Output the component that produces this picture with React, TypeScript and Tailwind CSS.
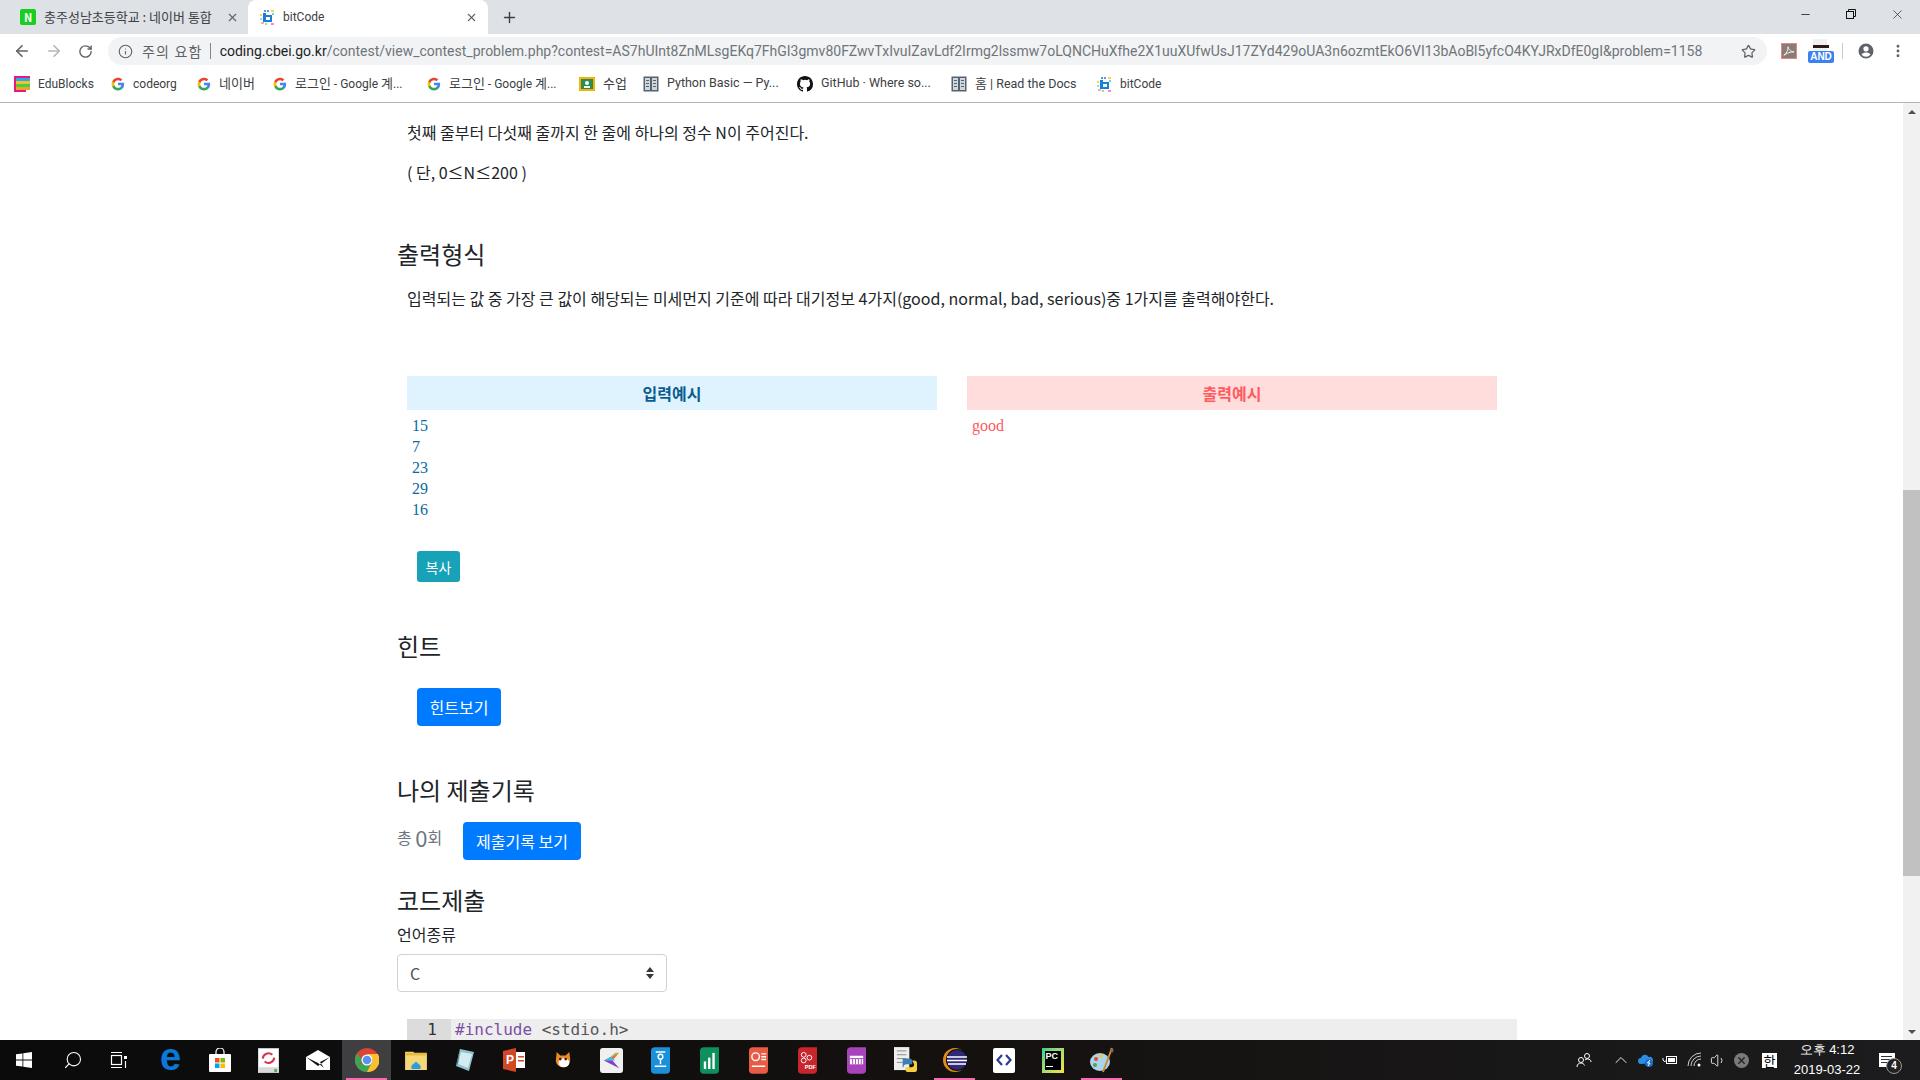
import { ArrowLeft, ArrowRight, RotateCw, Info, Star, Plus, X, Minus, Search, ChevronUp, Volume1, EllipsisVertical } from "lucide-react";
import type { ReactNode } from "react";

const URL_REST =
  "/contest/view_contest_problem.php?contest=AS7hUInt8ZnMLsgEKq7FhGI3gmv80FZwvTxIvuIZavLdf2Irmg2lssmw7oLQNCHuXfhe2X1uuXUfwUsJ17ZYd429oUA3n6ozmtEkO6VI13bAoBl5yfcO4KYJRxDfE0gI&problem=1158";

const GoogleG = () => (
  <svg viewBox="0 0 48 48" className="w-[14px] h-[14px] shrink-0">
    <path fill="#4285F4" d="M45 24.5c0-1.6-.1-3.1-.4-4.5H24v8.5h11.800c-.5 2.700-2.100 5-4.400 6.600v5.500h7.100C42.700 36.700 45 31.100 45 24.500z" />
    <path fill="#34A853" d="M24 46c5.900 0 10.900-2 14.500-5.400l-7.100-5.500c-2 1.300-4.500 2.100-7.400 2.100-5.700 0-10.500-3.800-12.200-9H4.500v5.700C8.100 41 15.500 46 24 46z" />
    <path fill="#FBBC05" d="M11.800 28.700c-.4-1.300-.7-2.700-.7-4.200s.3-2.900.7-4.200v-5.700H4.500C3 17.500 2 20.900 2 24.500s1 7 2.500 9.900l7.300-5.700z" />
    <path fill="#EA4335" d="M24 11.300c3.200 0 6.100 1.100 8.400 3.300l6.300-6.300C34.900 4.800 29.900 2.700 24 2.700 15.500 2.700 8.100 7.700 4.500 14.600l7.300 5.700c1.700-5.200 6.500-9 12.200-9z" />
  </svg>
);

const BitCodeIcon = () => (
  <svg viewBox="0 0 16 16" className="w-[16px] h-[16px] shrink-0">
    <rect x="5" y="1" width="2" height="2" fill="#3fa9e8" />
    <rect x="8" y="1" width="2" height="2" fill="#7a8fd0" />
    <rect x="12" y="1" width="3" height="2" fill="#f7d54a" />
    <rect x="4" y="4" width="3" height="9" fill="#1b7fd6" />
    <rect x="7" y="6" width="6" height="2" fill="#1b7fd6" />
    <rect x="11" y="8" width="2" height="5" fill="#1b7fd6" />
    <rect x="7" y="11" width="4" height="2" fill="#1b7fd6" />
    <rect x="1" y="5" width="2" height="2" fill="#f7d54a" />
    <rect x="1" y="9" width="2" height="2" fill="#8fd9f5" />
    <rect x="13" y="4" width="2" height="2" fill="#66d4ee" />
    <rect x="2" y="13" width="3" height="2" fill="#f7a8c8" />
    <rect x="12" y="14" width="3" height="2" fill="#f28bd0" />
    <rect x="6" y="14" width="2" height="2" fill="#a7e26b" />
  </svg>
);

const BookIcon = () => (
  <svg viewBox="0 0 16 16" className="w-[16px] h-[16px] shrink-0">
    <rect x="0.500" y="0.500" width="15" height="15" fill="#56626e" />
    <rect x="2" y="2" width="5" height="12" fill="#cfd6dc" />
    <rect x="9" y="2" width="5" height="12" fill="#cfd6dc" />
    <rect x="3" y="4" width="3" height="1" fill="#56626e" />
    <rect x="10" y="4" width="3" height="1" fill="#56626e" />
    <rect x="3" y="7" width="3" height="1" fill="#56626e" />
    <rect x="10" y="7" width="3" height="1" fill="#56626e" />
    <rect x="3" y="10" width="3" height="1" fill="#56626e" />
    <rect x="10" y="10" width="3" height="1" fill="#56626e" />
  </svg>
);

const Bookmark = ({ icon, label, w }: { icon: ReactNode; label: ReactNode; w: string }) => (
  <div className={`flex items-center gap-2 h-full ${w}`}>
    {icon}
    <span className="text-[12px] text-[#3c4043] whitespace-nowrap font-['Roboto','Noto_Sans_CJK_KR',sans-serif]">{label}</span>
  </div>
);

const Slot = ({ children, active, on }: { children?: ReactNode; active?: boolean; on?: boolean }) => (
  <div className={`relative w-[49px] h-full flex items-center justify-center ${on ? "bg-[#3f3f42]" : ""}`}>
    {children}
    {active && <div className="absolute bottom-0 left-[4px] right-[4px] h-[2px] bg-[#f76bb0]" />}
  </div>
);

const Section = ({ children, className }: { children: ReactNode; className: string }) => (
  <h4 className={`text-[24px] leading-[29px] text-[#212529] font-normal ${className}`}>{children}</h4>
);

export default function App() {
  return (
    <div className="w-[1920px] h-[1080px] overflow-hidden flex flex-col bg-white font-['Noto_Sans_CJK_KR',sans-serif]">
      {/* tab strip */}
      <div className="h-[34px] shrink-0 bg-[#dee1e6] flex items-end pl-[8px] relative">
        <div className="w-[240px] h-[34px] flex items-center pl-[12px] pr-[9px] gap-[8px]">
          <div className="w-[16px] h-[16px] rounded-[2px] bg-[#19ce21] flex items-center justify-center text-white text-[11px] font-bold leading-none">N</div>
          <span className="text-[13px] text-[#3c4043] w-[172px] overflow-hidden whitespace-nowrap">충주성남초등학교 : 네이버 통합</span>
          <X size={13} strokeWidth={2} className="text-[#5f6368] ml-auto" />
        </div>
        <div className="w-[240px] h-[34px] bg-white rounded-t-[8px] flex items-center pl-[11px] pr-[10px] gap-[8px]">
          <BitCodeIcon />
          <span className="text-[12px] text-[#3c4043] font-['Roboto',sans-serif]">bitCode</span>
          <X size={13} strokeWidth={2} className="text-[#5f6368] ml-auto" />
        </div>
        <div className="h-[34px] flex items-center ml-[13px]">
          <Plus size={17} strokeWidth={2} className="text-[#3c4043]" />
        </div>
        <div className="ml-auto h-[28px] self-start flex items-center text-[#111]">
          <div className="w-[46px] flex justify-center"><Minus size={13} strokeWidth={1.400} /></div>
          <div className="w-[46px] flex justify-center">
            <svg viewBox="0 0 10 10" className="w-[10px] h-[10px]" fill="none" stroke="currentColor" strokeWidth="1"><rect x="0.500" y="2.500" width="7" height="7" /><path d="M2.500 2.500v-2h7v7h-2" /></svg>
          </div>
          <div className="w-[46px] flex justify-center"><X size={15} strokeWidth={1} /></div>
        </div>
      </div>

      {/* toolbar */}
      <div className="h-[34px] shrink-0 bg-white flex items-center relative">
        <div className="w-[108px] flex items-center pl-[13px] text-[#5f6368]">
          <ArrowLeft size={18} strokeWidth={2.200} />
          <ArrowRight size={18} strokeWidth={2.200} className="ml-[14px] text-[#b4b6b9]" />
          <RotateCw size={15} strokeWidth={2.200} className="ml-[15px]" />
        </div>
        <div className="w-[1659px] h-[28px] rounded-full bg-[#f1f3f4] flex items-center pl-[10px] whitespace-nowrap overflow-hidden">
          <Info size={15} strokeWidth={1.800} className="text-[#5f6368] shrink-0" />
          <span className="ml-[9px] text-[14px] tracking-[1.200px] text-[#5f6368]">주의 요함</span>
          <span className="ml-[7px] w-[1px] h-[16px] bg-[#80868b]" />
          <span className="ml-[9px] pt-[1px] font-['Roboto',sans-serif] text-[14px] text-[#202124] shrink-0">coding.cbei.go.kr</span>
          <span className="pt-[1px] font-['Roboto',sans-serif] text-[14px] text-[#70757a] shrink-0">{URL_REST}</span>
          <Star size={15} strokeWidth={2} className="absolute left-[1741px] text-[#5f6368]" />
        </div>
        <div className="ml-[14px] w-[16px] h-[16px] bg-[#8a7a78] border border-[#e08a7c] flex items-center justify-center">
          <svg viewBox="0 0 14 14" className="w-[12px] h-[12px]" fill="none" stroke="#fff" strokeWidth="1"><path d="M1 12c3-2 5-6 5-10 0 3 3 6 7 6-4 0-8 1-12 4z" /></svg>
        </div>
        <div className="ml-[11px] relative w-[26px] h-[24px]">
          <div className="absolute left-[5px] top-0 w-[14px] h-[14px] bg-[#f1f1f1]" />
          <div className="absolute left-[5px] top-[6px] w-[16px] h-[3px] bg-[#2a1a1a]" />
          <div className="absolute bottom-0 left-0 w-[26px] h-[12px] bg-[#3b82f0] rounded-[2px] text-white font-['Liberation_Sans',sans-serif] font-bold text-[10px] leading-[12px] text-center">AND</div>
        </div>
        <div className="ml-[8px] w-[1px] h-[16px] bg-[#c8cacc]" />
        <svg viewBox="0 0 24 24" className="ml-[14px] w-[18px] h-[18px]" fill="#5f6368"><path d="M12 2a10 10 0 100 20 10 10 0 000-20zm0 3.500a3.500 3.500 0 110 7 3.500 3.500 0 010-7zm0 14.100a7.700 7.700 0 01-6-3c1.500-1.600 4-2.500 6-2.500s4.500.9 6 2.500a7.700 7.700 0 01-6 3z" /></svg>
        <EllipsisVertical size={16} strokeWidth={2.400} className="ml-[15px] text-[#5f6368]" />
      </div>

      {/* bookmarks */}
      <div className="h-[35px] shrink-0 bg-white border-b border-[#b5b5b5] flex items-center pl-[14px] pb-[3px]">
        <Bookmark w="w-[97px]" label="EduBlocks" icon={
          <svg viewBox="0 0 16 16" className="w-[16px] h-[16px] shrink-0">
            <path d="M0 0h16v2H2v12h10v2H0z" fill="#e6197f" />
            <rect x="2" y="2" width="14" height="3" fill="#29a9ef" />
            <rect x="2" y="5" width="14" height="3" fill="#f6c026" />
            <rect x="2" y="8" width="14" height="3" fill="#3fd14a" />
            <rect x="2" y="11" width="14" height="3" fill="#f6a026" />
          </svg>
        } />
        <Bookmark w="w-[86px]" label="codeorg" icon={<GoogleG />} />
        <Bookmark w="w-[76px]" label={<span className="text-[13px]">네이버</span>} icon={<GoogleG />} />
        <Bookmark w="w-[154px]" label={<><span className="text-[13px]">로그인</span> - Google <span className="text-[13px]">계</span>...</>} icon={<GoogleG />} />
        <Bookmark w="w-[152px]" label={<><span className="text-[13px]">로그인</span> - Google <span className="text-[13px]">계</span>...</>} icon={<GoogleG />} />
        <Bookmark w="w-[64px]" label={<span className="text-[13px]">수업</span>} icon={
          <svg viewBox="0 0 16 16" className="w-[16px] h-[16px] shrink-0">
            <rect width="16" height="14" y="1" fill="#f4b400" />
            <rect x="2" y="3" width="12" height="10" fill="#2e8b57" />
            <circle cx="8" cy="7" r="2" fill="#fff" />
            <rect x="5" y="10" width="6" height="2" fill="#fff" />
          </svg>
        } />
        <Bookmark w="w-[154px]" label={<span className="text-[12.500px]">Python Basic — Py...</span>} icon={<BookIcon />} />
        <Bookmark w="w-[154px]" label={<span className="text-[12.500px]">GitHub · Where so...</span>} icon={
          <svg viewBox="0 0 16 16" className="w-[16px] h-[16px] shrink-0" fill="#111"><path d="M8 0C3.580 0 0 3.580 0 8c0 3.540 2.290 6.530 5.470 7.590.4.070.55-.17.55-.38 0-.19-.01-.82-.01-1.490-2.010.370-2.530-.49-2.690-.94-.09-.23-.48-.94-.82-1.130-.28-.15-.68-.52-.01-.53.630-.01 1.080.58 1.230.82.720 1.210 1.870.87 2.330.66.070-.52.280-.87.510-1.070-1.780-.2-3.640-.89-3.640-3.950 0-.87.310-1.590.82-2.150-.08-.2-.36-1.020.08-2.120 0 0 .67-.21 2.200.82a7.420 7.420 0 014 0c1.530-1.040 2.200-.82 2.200-.82.440 1.100.16 1.920.08 2.120.510.560.82 1.270.82 2.150 0 3.070-1.870 3.750-3.650 3.950.290.250.54.730.54 1.480 0 1.070-.01 1.930-.01 2.200 0 .21.150.46.550.38A8.010 8.010 0 0016 8c0-4.420-3.580-8-8-8z" /></svg>
        } />
        <Bookmark w="w-[145px]" label={<span className="text-[12.500px]"><span className="text-[13px]">홈</span> | Read the Docs</span>} icon={<BookIcon />} />
        <Bookmark w="w-auto" label="bitCode" icon={<BitCodeIcon />} />
      </div>

      {/* page */}
      <div className="flex-1 min-h-0 flex">
        <main className="flex-1 min-w-0 overflow-hidden pl-[397px] text-[16px] leading-[24px] text-[#212529]">
          <div className="pl-[10px] pt-[17px]">
            <p className="mb-[16px]">첫째 줄부터 다섯째 줄까지 한 줄에 하나의 정수 N이 주어진다.</p>
            <p>( 단, 0≤N≤200 )</p>
          </div>
          <Section className="mt-[55px]">출력형식</Section>
          <p className="pl-[10px] mt-[18px]">입력되는 값 중 가장 큰 값이 해당되는 미세먼지 기준에 따라 대기정보 4가지(good, normal, bad, serious)중 1가지를 출력해야한다.</p>

          <div className="ml-[10px] mt-[66px] w-[1090px] grid grid-cols-2 gap-x-[30px]">
            <div>
              <div className="h-[34px] bg-[#dff3ff] text-[#0b5c8f] font-bold text-center leading-[34px]">입력예시</div>
              <pre className="mt-[5px] pl-[5px] font-['Liberation_Serif',serif] text-[16px] leading-[21px] text-[#0b6aa5]">15{"\n"}7{"\n"}23{"\n"}29{"\n"}16</pre>
            </div>
            <div>
              <div className="h-[34px] bg-[#ffdddd] text-[#ff5a5f] font-bold text-center leading-[34px]">출력예시</div>
              <pre className="mt-[5px] pl-[5px] font-['Liberation_Serif',serif] text-[16px] leading-[21px] text-[#ff5a5f]">good</pre>
            </div>
          </div>

          <button className="block ml-[20px] mt-[31px] w-[43px] h-[31px] rounded-[3px] bg-[#17a2b8] text-white text-[14px]">복사</button>

          <Section className="mt-[49px]">힌트</Section>
          <button className="block ml-[20px] mt-[28px] w-[84px] h-[38px] rounded-[4px] bg-[#007bff] text-white text-[16px]">힌트보기</button>

          <Section className="mt-[49px]">나의 제출기록</Section>
          <div className="flex items-start mt-[18px] h-[38px]">
            <div className="w-[66px] text-[#6c757d] flex items-center h-[30px]">총&nbsp;<span className="text-[22px]">0</span>회</div>
            <button className="w-[118px] h-[38px] rounded-[4px] bg-[#007bff] text-white text-[16px]">제출기록 보기</button>
          </div>

          <Section className="mt-[25px]">코드제출</Section>
          <div className="mt-[8px]">언어종류</div>
          <div className="mt-[8px] w-[270px] h-[38px] border border-[#ced4da] rounded-[4px] flex items-center pl-[12px] pr-[12px] text-[#495057]">
            <span>C</span>
            <svg viewBox="0 0 8 12" className="ml-auto w-[8px] h-[12px]" fill="#343a40"><path d="M4 0L8 5H0zM4 12L0 7h8z" /></svg>
          </div>

          <div className="ml-[10px] mt-[27px] w-[1110px] h-[30px] bg-[#eeeeee] flex font-['DejaVu_Sans_Mono',monospace] text-[16px] leading-[22px]">
            <div className="w-[44px] h-full bg-[#dcdcdc] text-right pr-[14px] text-[#333]">1</div>
            <div className="pl-[4px] text-[#555] whitespace-pre"><span className="text-[#7a4fa3]">#include</span> &lt;stdio.h&gt;</div>
          </div>
        </main>

        {/* scrollbar */}
        <div className="w-[17px] shrink-0 bg-[#f1f1f1] flex flex-col items-center relative">
          <div className="h-[17px] flex items-center justify-center">
            <div className="w-0 h-0 border-x-[4px] border-x-transparent border-b-[4px] border-b-[#505050]" />
          </div>
          <div className="mt-[370px] w-full h-[386px] bg-[#c1c1c1]" />
          <div className="mt-auto h-[17px] flex items-center justify-center">
            <div className="w-0 h-0 border-x-[4px] border-x-transparent border-t-[4px] border-t-[#505050]" />
          </div>
        </div>
      </div>

      {/* taskbar */}
      <div className="h-[40px] shrink-0 flex items-center bg-gradient-to-r from-[#0b0b0c] via-[#14110f] to-[#1c1c1e] text-white pl-0 -ml-[1px]">
        <Slot>
          <svg viewBox="0 0 16 16" className="w-[16px] h-[16px]" fill="#fff"><path d="M0 2.300 6.500 1.400v6.200H0zM7.300 1.300 16 0v7.600H7.300zM0 8.400h6.500v6.200L0 13.700zM7.300 8.400H16V16l-8.700-1.300z" /></svg>
        </Slot>
        <Slot><Search size={20} strokeWidth={1.300} className="-scale-x-100" /></Slot>
        <Slot>
          <svg viewBox="0 0 18 18" className="w-[18px] h-[18px] -ml-[5px]" fill="none" stroke="#fff" strokeWidth="1.200"><path d="M1 1.500h11M1 16.500h11" /><rect x="1.500" y="4.500" width="10" height="9" /><rect x="14" y="5" width="3" height="3" fill="#fff" stroke="none" /><path d="M15.500 10v7" /></svg>
        </Slot>
        <Slot><span className="font-['Liberation_Sans',sans-serif] text-[38px] leading-none font-bold text-[#0a78d7] -mt-[7px]">e</span></Slot>
        <Slot>
          <svg viewBox="0 0 24 24" className="w-[24px] h-[24px]">
            <path d="M8 7V4a4 4 0 018 0v3" fill="none" stroke="#fff" strokeWidth="1.200" />
            <rect x="1" y="6" width="22" height="18" rx="1" fill="#fff" />
            <rect x="7" y="10" width="4.500" height="4.500" fill="#f25022" />
            <rect x="12.500" y="10" width="4.500" height="4.500" fill="#7fba00" />
            <rect x="7" y="15.500" width="4.500" height="4.500" fill="#00a4ef" />
            <rect x="12.500" y="15.500" width="4.500" height="4.500" fill="#ffb900" />
          </svg>
        </Slot>
        <Slot>
          <svg viewBox="0 0 22 26" className="w-[21px] h-[25px]">
            <rect width="22" height="26" fill="#d9d9d9" />
            <rect x="1" y="1" width="20" height="19" fill="#fff" />
            <path d="M5 11a6 6 0 0110-4M17 10a6 6 0 01-10 4" fill="none" stroke="#d8344f" strokeWidth="2.200" />
            <rect x="17" y="22" width="3" height="3" fill="#5aa85a" />
          </svg>
        </Slot>
        <Slot>
          <svg viewBox="0 0 24 20" className="w-[24px] h-[20px]">
            <path d="M0 7 12 0l12 7v13H0z" fill="#fff" />
            <path d="M0 7l12 9 12-9-10 5 4 6-6-5z" fill="#111" />
          </svg>
        </Slot>
        <Slot on active>
          <svg viewBox="0 0 24 24" className="w-[24px] h-[24px]">
            <circle cx="12" cy="12" r="12" fill="#db4437" />
            <path d="M12 12 1.600 18A12 12 0 0012 24l6-12z" fill="#3aa757" />
            <path d="M12 24A12 12 0 0022.900 6H12l6 6z" fill="#fbc02d" />
            <path d="M2.100 5.200A12 12 0 001.600 18l6-5z" fill="#3aa757" />
            <circle cx="12" cy="12" r="5.500" fill="#fff" />
            <circle cx="12" cy="12" r="4.300" fill="#5b92f0" />
          </svg>
        </Slot>
        <Slot>
          <svg viewBox="0 0 24 22" className="w-[22px] h-[20px]">
            <path d="M0 2h9l2 2h13v18H0z" fill="#f5d778" />
            <rect y="3" width="24" height="3" fill="#e8b93f" />
            <path d="M7 21v-4l5-4 5 4v4z" fill="#2a9fe0" />
          </svg>
        </Slot>
        <Slot>
          <svg viewBox="0 0 22 24" className="w-[22px] h-[24px]">
            <path d="M6 1 20 4 15 23 2 18z" fill="#8fc3cf" />
            <path d="M7 4 18 6l-4 14L4 16z" fill="#d4ecef" />
            <path d="M2 18 6 1 4 16z" fill="#4e7f8a" />
          </svg>
        </Slot>
        <Slot>
          <svg viewBox="0 0 22 24" className="w-[22px] h-[24px]">
            <path d="M0 3 13 0v24L0 21z" fill="#d24726" />
            <rect x="13" y="4" width="9" height="16" fill="#fff" />
            <rect x="15" y="8" width="6" height="1.500" fill="#d24726" />
            <rect x="15" y="12" width="6" height="1.500" fill="#d24726" />
            <text x="3" y="16" fontSize="12" fontWeight="bold" fill="#fff" fontFamily="Liberation Sans">P</text>
          </svg>
        </Slot>
        <Slot>
          <svg viewBox="0 0 20 22" className="w-[18px] h-[20px]">
            <path d="M3 2 7 6h6l4-4 1 8a8 8 0 01-16 2z" fill="#f08a24" />
            <ellipse cx="11" cy="14" rx="6" ry="5" fill="#fff" />
            <circle cx="7" cy="10" r="1.500" fill="#222" />
            <circle cx="13" cy="10" r="1.500" fill="#222" />
          </svg>
        </Slot>
        <Slot>
          <svg viewBox="0 0 24 26" className="w-[23px] h-[25px]">
            <rect width="24" height="26" rx="3" fill="#f0f0f0" />
            <path d="M4 13 20 5l-7 8z" fill="#ef6a3c" />
            <path d="M4 13l7-4 5 4z" fill="#37c2e8" />
            <path d="M4 13l9 0 7 8z" fill="#7f3fd0" />
            <path d="M10 10l6-5h4z" fill="#8cc63f" />
          </svg>
        </Slot>
        <Slot>
          <svg viewBox="0 0 20 28" className="w-[19px] h-[27px]">
            <path d="M0 4a4 4 0 014-4h16v24a4 4 0 01-4 4H4a4 4 0 01-4-4z" fill="#1a90d8" />
            <circle cx="10" cy="10" r="2.500" fill="none" stroke="#fff" strokeWidth="1.500" />
            <path d="M5 5h10M10 13v5M4 20h12" stroke="#fff" strokeWidth="1.500" />
          </svg>
        </Slot>
        <Slot>
          <svg viewBox="0 0 20 28" className="w-[19px] h-[27px]">
            <path d="M0 4a4 4 0 014-4h16v24a4 4 0 01-4 4H4a4 4 0 01-4-4z" fill="#0e8f5e" />
            <rect x="4" y="15" width="2.500" height="8" fill="#fff" />
            <rect x="8.500" y="11" width="2.500" height="12" fill="#fff" />
            <rect x="13" y="6" width="2.500" height="17" fill="#fff" />
          </svg>
        </Slot>
        <Slot>
          <svg viewBox="0 0 20 28" className="w-[19px] h-[27px]">
            <path d="M0 4a4 4 0 014-4h16v24a4 4 0 01-4 4H4a4 4 0 01-4-4z" fill="#e85b45" />
            <circle cx="7" cy="10" r="4" fill="none" stroke="#fff" strokeWidth="1.500" />
            <path d="M13 7h5M13 10h5M13 13h5M3 20h14" stroke="#fff" strokeWidth="1.500" />
          </svg>
        </Slot>
        <Slot>
          <svg viewBox="0 0 20 28" className="w-[19px] h-[27px]">
            <path d="M0 4a4 4 0 014-4h16v24a4 4 0 01-4 4H4a4 4 0 01-4-4z" fill="#c9252c" />
            <circle cx="6" cy="8" r="2.500" fill="none" stroke="#fff" />
            <circle cx="6" cy="14" r="2.500" fill="none" stroke="#fff" />
            <circle cx="12" cy="11" r="2.500" fill="none" stroke="#fff" />
            <text x="7" y="23" fontSize="6" fontWeight="bold" fill="#fff" fontFamily="Liberation Sans">PDF</text>
          </svg>
        </Slot>
        <Slot>
          <svg viewBox="0 0 20 28" className="w-[19px] h-[27px]">
            <path d="M0 4a4 4 0 014-4h16v24a4 4 0 01-4 4H4a4 4 0 01-4-4z" fill="#a743bb" />
            <rect x="3" y="9" width="14" height="9" fill="#fff" />
            <path d="M3 12h14M6 12v6M9 12v6M12 12v6M15 12v6" stroke="#a743bb" />
          </svg>
        </Slot>
        <Slot>
          <svg viewBox="0 0 24 28" className="w-[23px] h-[27px]">
            <rect width="16" height="24" fill="#eeeeee" />
            <path d="M3 4h10M3 8h10M3 12h10M3 16h6" stroke="#888" />
            <path d="M9 12h7a3 3 0 013 3v3h-6a3 3 0 00-3 3H9z" fill="#3f7fb5" />
            <path d="M19 14h2a3 3 0 013 3v6a3 3 0 01-3 3h-6a3 3 0 01-3-3v-2h6a3 3 0 003-3z" fill="#f7cf3c" />
          </svg>
        </Slot>
        <Slot active>
          <svg viewBox="0 0 24 24" className="w-[24px] h-[24px]">
            <circle cx="12" cy="12" r="12" fill="#e28a17" />
            <circle cx="14" cy="12" r="11" fill="#0c0c10" />
            <circle cx="14" cy="12" r="10" fill="#2f2a78" />
            <path d="M4 9h20M4 12.500h20M5 16h18" stroke="#fff" strokeWidth="1.500" />
          </svg>
        </Slot>
        <Slot>
          <div className="w-[22px] h-[25px] bg-white rounded-[2px] flex items-center justify-center">
            <svg viewBox="0 0 16 12" className="w-[16px] h-[12px]" fill="none" stroke="#2f3b90" strokeWidth="2.200"><path d="M6 1 1.500 6 6 11M10 1l4.500 5L10 11" /></svg>
          </div>
        </Slot>
        <Slot>
          <div className="w-[22px] h-[25px] bg-gradient-to-br from-[#1ed28a] to-[#f7e23c] p-[3px]">
            <div className="w-full h-full bg-black text-white font-['Liberation_Sans',sans-serif] font-bold text-[9px] leading-[10px] px-[1px]">PC<div className="w-[7px] h-[1px] bg-white mt-[5px]" /></div>
          </div>
        </Slot>
        <Slot active>
          <svg viewBox="0 0 24 26" className="w-[24px] h-[26px]">
            <ellipse cx="10" cy="15" rx="10" ry="9" fill="#a9d4ec" />
            <circle cx="6" cy="12" r="2" fill="#e0443a" />
            <circle cx="11" cy="9" r="2" fill="#f4c63a" />
            <circle cx="5" cy="18" r="2" fill="#4aa84a" />
            <path d="M22 1 13 25" stroke="#c98a3a" strokeWidth="2" />
            <path d="M20 1l4 2-2 3z" fill="#8a6a45" />
          </svg>
        </Slot>

        {/* tray */}
        <div className="ml-auto flex items-center h-full w-[355px] relative">
          <svg viewBox="0 0 16 16" className="ml-[11px] w-[16px] h-[16px]" fill="none" stroke="#fff" strokeWidth="1"><circle cx="11" cy="4" r="2.500" /><circle cx="5" cy="8" r="2.500" /><path d="M1 15c0-3 2-4 4-4 1.500 0 3 .8 3.500 2.500M9 8c.7-.6 1.500-1 2.500-1 2 0 3.500 1 3.500 3" /></svg>
          <ChevronUp size={20} strokeWidth={1.100} className="ml-[19px]" />
          <svg viewBox="0 0 16 14" className="ml-[7px] w-[16px] h-[14px]"><path d="M3 11a3 3 0 010-6 4 4 0 017.500-1A3 3 0 0113 10z" fill="#2a8fe0" /><circle cx="11" cy="10" r="4" fill="#1a6fd0" /><path d="M12 7l-2.500 3H12l-2 3" stroke="#fff" fill="none" /></svg>
          <svg viewBox="0 0 16 10" className="ml-[8px] w-[16px] h-[10px]" fill="none" stroke="#fff"><rect x="4.500" y="1.500" width="10" height="7" /><rect x="6" y="3" width="7" height="4" fill="#fff" stroke="none" /><path d="M1 3v2a2 2 0 003 1" /></svg>
          <svg viewBox="0 0 16 16" className="ml-[9px] w-[16px] h-[16px]" fill="none" stroke="#cfcfcf" strokeWidth="1"><path d="M1 14a13 13 0 0113-13M4 14a10 10 0 0110-10M7 14a7 7 0 017-7" /><circle cx="12" cy="13" r="1.500" fill="#fff" stroke="none" /></svg>
          <Volume1 size={17} strokeWidth={1.200} className="ml-[7px]" />
          <div className="ml-[7px] w-[15px] h-[15px] rounded-full bg-[#7a7a7a] flex items-center justify-center"><X size={11} strokeWidth={3} className="text-[#222]" /></div>
          <div className="ml-[13px] w-[15px] h-[15px] bg-white text-black text-[13px] leading-[15px] text-center">한</div>
          <div className="ml-[15px] w-[70px] text-center text-[13px] leading-[20px] text-white font-['Liberation_Sans',sans-serif]">
            <div>오후 4:12</div>
            <div>2019-03-22</div>
          </div>
          <div className="ml-[17px] relative w-[16px] h-[14px] bg-white">
            <div className="absolute left-[2px] top-[3px] w-[11px] h-[1px] bg-[#333]" />
            <div className="absolute left-[2px] top-[6px] w-[11px] h-[1px] bg-[#333]" />
            <div className="absolute left-[2px] top-[9px] w-[7px] h-[1px] bg-[#333]" />
            <div className="absolute left-[7px] top-[5px] w-[16px] h-[16px] rounded-full bg-[#222] border border-[#999] text-white font-bold text-[10px] leading-[14px] text-center font-['Liberation_Sans',sans-serif]">4</div>
          </div>
        </div>
      </div>
    </div>
  );
}
